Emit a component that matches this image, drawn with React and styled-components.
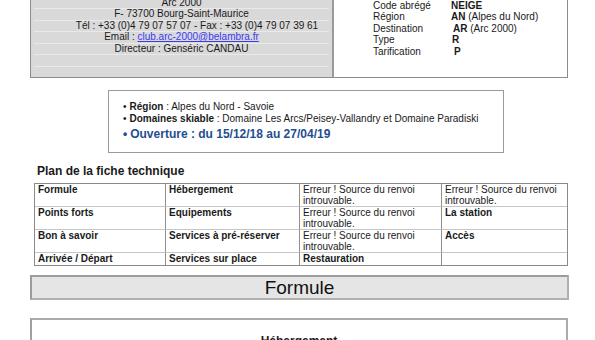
import React from 'react'
import styled, { createGlobalStyle } from 'styled-components'

const GlobalStyle = createGlobalStyle`
  *, *::before, *::after { box-sizing: border-box; }
  html, body { overflow: hidden; }
  body {
    margin: 0;
    background: #fff;
    color: #1a1a1a;
    font-family: "Liberation Sans", Arial, sans-serif;
  }
`

const address = [
    { text: 'Arc 2000' },
    { text: 'F- 73700 Bourg-Saint-Maurice' },
    { text: 'Tél : +33 (0)4 79 07 57 07 - Fax : +33 (0)4 79 07 39 61', shift: 31 },
    { text: 'Email : ', link: 'club.arc-2000@belambra.fr' },
    { text: 'Directeur : Genséric CANDAU' },
    { text: '' },
    { text: '' },
]

const codes = [
    { label: 'Code abrégé', value: 'NEIGE', indent: 0 },
    { label: 'Région', value: 'AN', extra: ' (Alpes du Nord)', indent: 0 },
    { label: 'Destination', value: 'AR', extra: ' (Arc 2000)', indent: 2 },
    { label: 'Type', value: 'R', indent: 1 },
    { label: 'Tarification', value: 'P', indent: 3 },
]

const plan = [
    [['Formule', true], ['Hébergement', true], ['Erreur ! Source du renvoi introuvable.'], ['Erreur ! Source du renvoi introuvable.']],
    [['Points forts', true], ['Equipements', true], ['Erreur ! Source du renvoi introuvable.'], ['La station', true]],
    [['Bon à savoir', true], ['Services à pré-réserver', true], ['Erreur ! Source du renvoi introuvable.'], ['Accès', true]],
    [['Arrivée / Départ', true], ['Services sur place', true], ['Restauration', true], ['']],
]

export default function App() {
    return (
        <>
            <GlobalStyle />
            <Page>
                <Header>
                    <AddressCard>
                        {address.map((line, i) => (
                            <AddressLine key={i} $shift={line.shift || 0}>
                                {line.text}
                                {line.link && <MailLink href="#">{line.link}</MailLink>}
                            </AddressLine>
                        ))}
                    </AddressCard>
                    <CodeCard>
                        {codes.map(row => (
                            <CodeRow key={row.label}>
                                <CodeLabel>{row.label}</CodeLabel>
                                <CodeValue $indent={row.indent}>
                                    <b>{row.value}</b>{row.extra}
                                </CodeValue>
                            </CodeRow>
                        ))}
                    </CodeCard>
                </Header>

                <InfoBox>
                    <InfoItem><b>Région</b> : Alpes du Nord - Savoie</InfoItem>
                    <InfoItem><b>Domaines skiable</b> : Domaine Les Arcs/Peisey-Vallandry et Domaine Paradiski</InfoItem>
                    <InfoItem $highlight>Ouverture : du 15/12/18 au 27/04/19</InfoItem>
                </InfoBox>

                <PlanTitle>Plan de la fiche technique</PlanTitle>
                <PlanGrid>
                    {plan.flat().map(([text, bold], i) => (
                        <PlanCell key={i} $bold={bold}>{text}</PlanCell>
                    ))}
                </PlanGrid>

                <SectionBand>Formule</SectionBand>

                <SectionBox>
                    <SectionHeading>Hébergement</SectionHeading>
                </SectionBox>
            </Page>
        </>
    )
}

const Page = styled.div`
  width: 538px;
  margin: -3.5px 0 0 30px;
`

const Header = styled.div`
  display: flex;
  font-size: 10px;
`

const AddressCard = styled.div`
  width: 304px;
  background: #d9d9d9;
  border-left: 1px solid #8c8c8c;
  border-right: 2px solid #9a9a9a;
  border-bottom: 1px solid #8c8c8c;
  text-align: center;
`

const AddressLine = styled.div`
  margin: 0 3px;
  height: 11.5px;
  line-height: 10.5px;
  border-top: 1px solid #e9e9e9;
  padding-left: ${p => p.$shift}px;
  white-space: nowrap;
`

const MailLink = styled.a`
  color: #3a3af2;
  text-decoration: underline;
`

const CodeCard = styled.div`
  flex: 1;
  background: #fff;
  border-right: 1px solid #8c8c8c;
  border-bottom: 1px solid #8c8c8c;
  padding: 3.3px 0 0 39px;
`

const CodeRow = styled.div`
  display: flex;
  line-height: 11.5px;
`

const CodeLabel = styled.span`
  width: 78px;
`

const CodeValue = styled.span`
  padding-left: ${p => p.$indent}px;
`

const InfoBox = styled.ul`
  list-style: none;
  width: 396px;
  margin: 12px 0 0 78px;
  padding: 10px 0 10px 14px;
  border: 1px solid #9a9a9a;
  font-size: 10px;
`

const InfoItem = styled.li`
  line-height: ${p => (p.$highlight ? '15px' : '12px')};
  font-size: ${p => (p.$highlight ? '12px' : '10px')};
  font-weight: ${p => (p.$highlight ? 'bold' : 'normal')};
  color: ${p => (p.$highlight ? '#1f4e8f' : '#1a1a1a')};
  margin-top: ${p => (p.$highlight ? '2px' : '0')};

  &::before {
    content: "•";
    margin-right: 3px;
  }
`

const PlanTitle = styled.h3`
  margin: 11px 0 0 7px;
  font-size: 12px;
  line-height: 14px;
  font-weight: bold;
`

const PlanGrid = styled.div`
  display: grid;
  grid-template-columns: 130px 134px 142px 126px;
  width: 534px;
  margin: 5px 0 0 4px;
  border: 1px solid #8a8a8a;
  font-size: 10px;
  line-height: 11px;
`

const PlanCell = styled.div`
  padding: 0 3px;
  font-weight: ${p => (p.$bold ? 'bold' : 'normal')};
  border-left: 1px solid #8f8f8f;
  border-top: 1px solid #c6c6c6;

  &:nth-child(4n + 1) { border-left: none; }
  &:nth-child(-n + 4) { border-top: none; }
  &:nth-last-child(-n + 4) { padding-bottom: 1px; }
`

const SectionBand = styled.h2`
  width: 539px;
  margin: 9px 0 0;
  height: 25px;
  background: #e5e5e5;
  border-top: 2px solid #9c9c9c;
  border-left: 2px solid #9c9c9c;
  border-bottom: 2px solid #b0b0b0;
  border-right: 2px solid #b0b0b0;
  font-size: 19px;
  line-height: 21px;
  font-weight: normal;
  text-align: center;
  color: #111;
`

const SectionBox = styled.div`
  margin-top: 18px;
  height: 120px;
  border-top: 2px solid #ababab;
  border-left: 2px solid #a0a0a0;
  border-right: 2px solid #ababab;
  padding-top: 14px;
`

const SectionHeading = styled.div`
  text-align: center;
  font-size: 12px;
  line-height: 14px;
  font-weight: bold;
`
